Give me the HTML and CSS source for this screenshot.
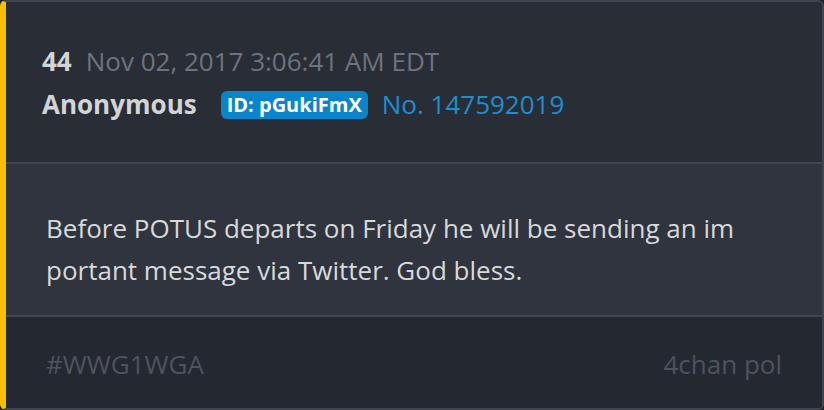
FILE: index.html
```html
<!DOCTYPE html>
<html>
<head>
<meta charset="utf-8">
<link rel="stylesheet" href="styles.css">
</head>
<body>
<div class="card">
  <div class="card-head">
    <div class="head-line">
      <span class="post-num">44</span>
      <span class="post-date">Nov 02, 2017 3:06:41 AM EDT</span>
    </div>
    <div class="head-line">
      <span class="author">Anonymous</span>
      <span class="id-badge">ID: pGukiFmX</span>
      <span class="post-no">No. 147592019</span>
    </div>
  </div>
  <div class="card-body">
    <p class="message">Before POTUS departs on Friday he will be sending an important message via Twitter. God bless.</p>
  </div>
  <div class="card-foot">
    <span class="tag">#WWG1WGA</span>
    <span class="source">4chan pol</span>
  </div>
</div>
</body>
</html>
```

FILE: styles.css
```css
html, body {
  margin: 0;
  padding: 0;
  background: #1d2027;
}

body {
  font-family: "Open Sans", "Noto Sans", sans-serif;
  width: 824px;
  height: 410px;
}

.card {
  box-sizing: border-box;
  width: 824px;
  height: 410px;
  border: 2px solid #3f444e;
  border-left: 6px solid #f8bf00;
  border-radius: 6px;
  overflow: hidden;
  display: flex;
  flex-direction: column;
}

.card-head {
  background: #292d36;
  padding: 38px 36px 36px 36px;
  border-bottom: 2px solid #40454f;
}

.head-line {
  display: flex;
  align-items: center;
  height: 43px;
  font-size: 26px;
  line-height: 43px;
}

.post-num {
  font-weight: 700;
  color: #d3d4d6;
  margin-right: 14px;
}

.post-date {
  color: #6e7380;
}

.author {
  font-weight: 700;
  color: #d3d4d6;
  margin-right: 24px;
}

.id-badge {
  display: inline-flex;
  align-items: center;
  height: 28px;
  padding: 0 6px;
  border-radius: 6px;
  background: #0a85c9;
  color: #ffffff;
  font-weight: 700;
  font-size: 20px;
  line-height: 28px;
  margin-right: 14px;
}

.post-no {
  color: #1a8fd2;
}

.card-body {
  background: #2f343e;
  padding: 43px 40px 24px 40px;
  border-bottom: 2px solid #40454f;
}

.message {
  margin: 0;
  width: 694px;
  font-size: 26px;
  line-height: 42px;
  color: #d8d9db;
  word-break: break-all;
}

.card-foot {
  flex: 1;
  background: #242831;
  padding: 31px 40px 0 40px;
  display: flex;
  justify-content: space-between;
  font-size: 26px;
  line-height: 32px;
  color: #4e535e;
}
```
